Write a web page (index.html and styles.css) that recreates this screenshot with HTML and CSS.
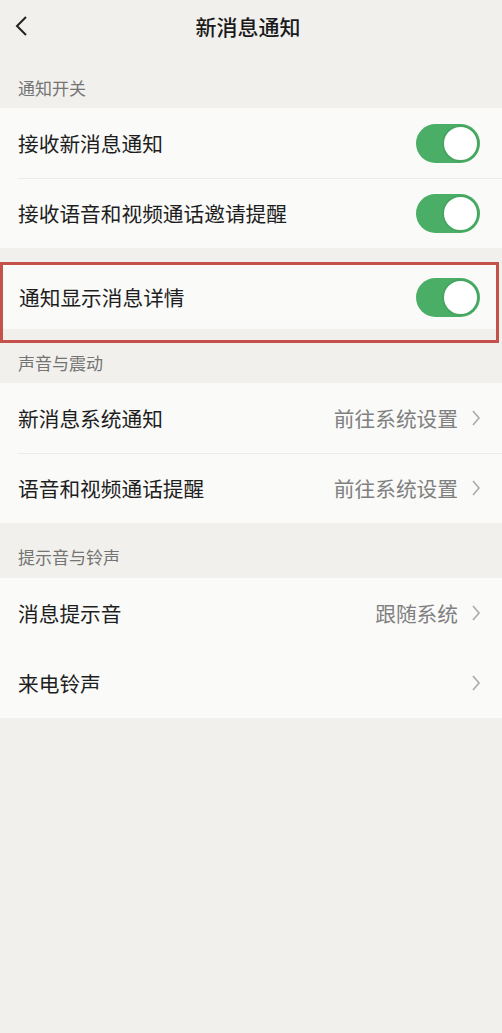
FILE: index.html
```html
<!DOCTYPE html>
<html lang="zh-CN">
<head>
  <meta charset="UTF-8" />
  <meta name="viewport" content="width=device-width, initial-scale=1.0" />
  <title>新消息通知</title>
  <link rel="stylesheet" href="styles.css">
</head>
<body>
  <header class="topbar">
    <svg class="back" width="14" height="22" viewBox="0 0 14 22">
      <polyline points="12,2 3,11 12,20" fill="none" stroke="#222" stroke-width="2" />
    </svg>
    <h1>新消息通知</h1>
  </header>

  <div class="section-title first">通知开关</div>
  <div class="card">
    <div class="row">
      <span class="label">接收新消息通知</span>
      <span class="switch"><span class="knob"></span></span>
    </div>
    <div class="row">
      <span class="label">接收语音和视频通话邀请提醒</span>
      <span class="switch"><span class="knob"></span></span>
    </div>
  </div>

  <div class="highlight">
    <div class="row short">
      <span class="label">通知显示消息详情</span>
      <span class="switch"><span class="knob"></span></span>
    </div>
  </div>

  <div class="section-title">声音与震动</div>
  <div class="card">
    <div class="row">
      <span class="label">新消息系统通知</span>
      <span class="value">前往系统设置 <svg class="arrow" width="10" height="18" viewBox="0 0 10 18"><polyline points="2,2 8,9 2,16" fill="none" stroke="#aaa" stroke-width="1.6" /></svg></span>
    </div>
    <div class="row">
      <span class="label">语音和视频通话提醒</span>
      <span class="value">前往系统设置 <svg class="arrow" width="10" height="18" viewBox="0 0 10 18"><polyline points="2,2 8,9 2,16" fill="none" stroke="#aaa" stroke-width="1.6" /></svg></span>
    </div>
  </div>

  <div class="section-title third">提示音与铃声</div>
  <div class="card plain">
    <div class="row">
      <span class="label">消息提示音</span>
      <span class="value">跟随系统 <svg class="arrow" width="10" height="18" viewBox="0 0 10 18"><polyline points="2,2 8,9 2,16" fill="none" stroke="#aaa" stroke-width="1.6" /></svg></span>
    </div>
    <div class="row">
      <span class="label">来电铃声</span>
      <span class="value"><svg class="arrow" width="10" height="18" viewBox="0 0 10 18"><polyline points="2,2 8,9 2,16" fill="none" stroke="#aaa" stroke-width="1.6" /></svg></span>
    </div>
  </div>
</body>
</html>
```

FILE: styles.css
```css
body {
  margin: 0;
  background-color: #f1f0ed;
  font-family: "Noto Sans CJK SC", "Noto Sans", sans-serif;
  color: #1e1e1e;
  min-height: 1033px;
}
.topbar {
  height: 52px;
  display: flex;
  align-items: center;
  justify-content: center;
  position: relative;
}
.topbar h1 {
  margin: 0 6px 0 0;
  font-size: 21px;
  font-weight: 500;
  color: #1a1a1a;
}
.back {
  position: absolute;
  left: 14px;
  top: 15px;
}
.section-title {
  font-size: 17px;
  line-height: 24px;
  color: #747474;
  padding: 8px 18px 8px;
}
.section-title.first { padding-top: 24px; }
.section-title.third { padding-top: 22px; padding-bottom: 9px; }
.card {
  background: #fafaf9;
}
.row {
  height: 70px;
  display: flex;
  align-items: center;
  justify-content: space-between;
  padding: 0 22px 0 18px;
  position: relative;
}
.card .row + .row::before {
  content: "";
  position: absolute;
  left: 18px;
  right: 0;
  top: 0;
  border-top: 1px solid #ecebe8;
}
.card.plain .row + .row::before { display: none; }
.row.short {
  height: 64px;
  background: #fafaf9;
  padding: 0 16px 0 16px;
}
.label {
  font-size: 20.7px;
}
.value {
  font-size: 20.7px;
  color: #808080;
  display: flex;
  align-items: center;
  gap: 13px;
  margin-right: -1px;
}
.switch {
  width: 64px;
  height: 39px;
  border-radius: 20px;
  background: #4bae66;
  display: flex;
  align-items: center;
  justify-content: flex-end;
  padding: 1px;
  box-sizing: border-box;
}
.knob {
  width: 37px;
  height: 37px;
  border-radius: 50%;
  background: #fff;
  border: 2px solid #46a661;
  box-sizing: border-box;
}
.highlight {
  margin: 14px 3px 0 0;
  border: 3px solid #c5524a;
  padding-bottom: 11px;
}
```
